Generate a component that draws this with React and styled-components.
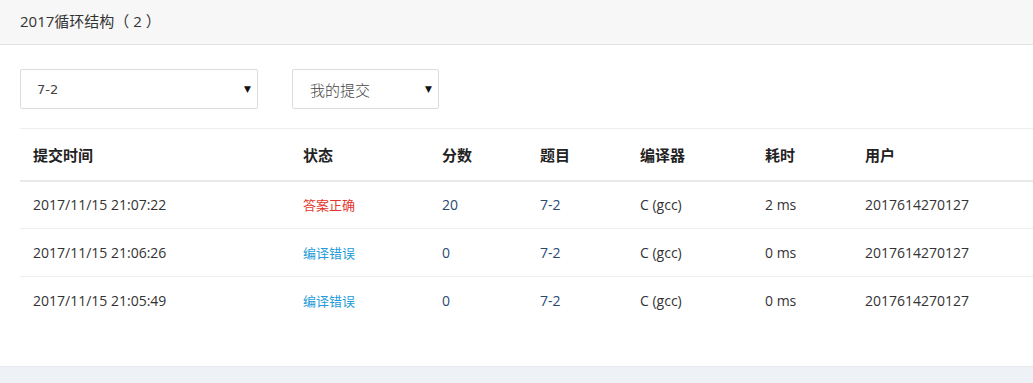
import React from 'react';
import styled, { createGlobalStyle } from 'styled-components';

const GlobalStyle = createGlobalStyle`
	html, body {
		margin: 0;
		padding: 0;
		background: #eef1f5;
		font-family: "Open Sans", "Noto Sans CJK SC", sans-serif;
		color: #333;
	}
`;

const rows = [
	{ time: '2017/11/15 21:07:22', status: '答案正确', ok: true, score: 20, ms: 2 },
	{ time: '2017/11/15 21:06:26', status: '编译错误', ok: false, score: 0, ms: 0 },
	{ time: '2017/11/15 21:05:49', status: '编译错误', ok: false, score: 0, ms: 0 },
];

const columns = [
	{ title: '提交时间', width: 270 },
	{ title: '状态', width: 139 },
	{ title: '分数', width: 98 },
	{ title: '题目', width: 100 },
	{ title: '编译器', width: 125 },
	{ title: '耗时', width: 100 },
	{ title: '用户', width: 260 },
];

const tableWidth = columns.reduce((sum, c) => sum + c.width, 0);

function App() {
	return (
		<Page>
			<GlobalStyle />
			<Card>
				<CardHeader>2017循环结构（ 2 ）</CardHeader>
				<CardBody>
					<Filters>
						<Select width={238}>
							<span>7-2</span>
							<Arrow>▼</Arrow>
						</Select>
						<Select width={147} cjk>
							<span>我的提交</span>
							<Arrow>▼</Arrow>
						</Select>
					</Filters>
					<TableWrap>
						<Table style={{ width: tableWidth }}>
							<colgroup>
								{columns.map((c) => (
									<col key={c.title} style={{ width: c.width }} />
								))}
							</colgroup>
							<thead>
								<tr>
									{columns.map((c) => (
										<Th key={c.title}>{c.title}</Th>
									))}
								</tr>
							</thead>
							<tbody>
								{rows.map((r) => (
									<tr key={r.time}>
										<Td>{r.time}</Td>
										<Td>
											<Status ok={r.ok}>{r.status}</Status>
										</Td>
										<Td>
											<Link>{r.score}</Link>
										</Td>
										<Td>
											<Link>7-2</Link>
										</Td>
										<Td>C (gcc)</Td>
										<Td>{r.ms} ms</Td>
										<Td>2017614270127</Td>
									</tr>
								))}
							</tbody>
						</Table>
					</TableWrap>
				</CardBody>
			</Card>
		</Page>
	);
}

export default App;

const Page = styled.div`
	width: 100%;
	overflow: hidden;
`;

const Card = styled.div`
	background: #fff;
	border-bottom: 1px solid #e6e8eb;
`;

const CardHeader = styled.div`
	height: 45px;
	line-height: 42px;
	padding-left: 20px;
	background: #f7f7f7;
	border-bottom: 1px solid #e3e3e3;
	font-size: 15px;
	color: #333;
	box-sizing: border-box;
`;

const CardBody = styled.div`
	padding: 24px 0 41px 20px;
`;

const Filters = styled.div`
	display: flex;
	gap: 34px;
	margin-bottom: 19px;
`;

const Select = styled.div`
	width: ${(p) => p.width}px;
	height: 40px;
	box-sizing: border-box;
	border: 1px solid #dcdcdc;
	border-radius: 2px;
	display: flex;
	align-items: center;
	justify-content: space-between;
	padding: 0 6px 0 ${(p) => (p.cjk ? 17 : 16)}px;
	color: #444;
	span {
		font-size: ${(p) => (p.cjk ? 15 : 13)}px;
		font-weight: ${(p) => (p.cjk ? 300 : 400)};
		font-family: ${(p) =>
			p.cjk ? '"Noto Sans CJK SC", sans-serif' : '"DejaVu Sans", sans-serif'};
	}
`;

const Arrow = styled.i`
	font-style: normal;
	font-size: 9px;
	color: #111;
	font-family: "DejaVu Sans", sans-serif;
`;

const TableWrap = styled.div`
	overflow: hidden;
`;

const Table = styled.table`
	border-collapse: collapse;
	table-layout: fixed;
	border-top: 1px solid #eeeeee;
`;

const Th = styled.th`
	text-align: left;
	height: 52px;
	padding: 0 13px;
	font-size: 15px;
	font-weight: 700;
	color: #222;
	border-bottom: 2px solid #e9e9e9;
	box-sizing: border-box;
`;

const Td = styled.td`
	height: 48px;
	padding: 0 13px;
	font-size: 14px;
	color: #333;
	border-bottom: 1px solid #ededed;
	box-sizing: border-box;
	white-space: nowrap;
	tr:last-child & {
		border-bottom: none;
	}
`;

const Status = styled.span`
	font-size: 13px;
	color: ${(p) => (p.ok ? '#e2362c' : '#1f9bd8')};
`;

const Link = styled.span`
	color: #2a4a73;
`;
